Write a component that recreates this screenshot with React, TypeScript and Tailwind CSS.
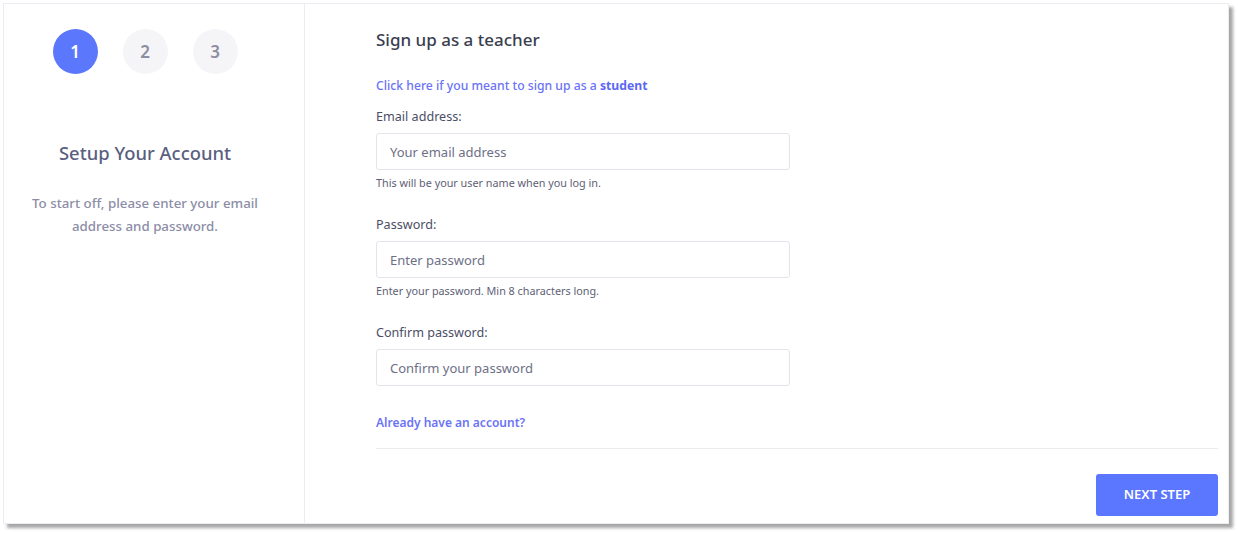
import type { JSX } from "react";

const font = { fontFamily: '"Noto Sans", "Open Sans", sans-serif' };

type FieldProps = {
  label: string;
  placeholder: string;
  type?: string;
  hint?: string;
};

const Field = ({ label, placeholder, type = "text", hint }: FieldProps): JSX.Element => {
  return (
    <div className="flex flex-col">
      <label className="text-[12.6px] leading-[18px] text-[#4b4e66]">{label}</label>
      <input
        type={type}
        placeholder={placeholder}
        className="mt-[7px] h-[37px] w-[414px] rounded-[3px] border border-[#e4e4ee] bg-white px-[13px] text-[13px] text-[#4b4e66] outline-none placeholder:text-[#6d7085]"
      />
      {hint && <p className="mt-[5px] text-[10.8px] leading-[16px] text-[#5e6175]">{hint}</p>}
    </div>
  );
};

const Step = ({ n, active }: { n: number; active?: boolean }): JSX.Element => (
  <div
    className={
      active
        ? "flex h-[45px] w-[45px] items-center justify-center rounded-full bg-[#5b78fd] text-[17px] font-semibold text-white"
        : "flex h-[45px] w-[45px] items-center justify-center rounded-full bg-[#f5f5f8] text-[17px] font-semibold text-[#8d8ea3]"
    }
  >
    {n}
  </div>
);

export default function App(): JSX.Element {
  return (
    <div className="h-[534px] w-[1238px] bg-white pl-[3px] pt-[3px]" style={font}>
      <div className="flex h-[521px] w-[1226px] border border-[#ececf2] bg-white shadow-[4px_4px_3px_rgba(0,0,0,0.35)]">
        {/* left panel */}
        <div className="flex w-[301px] flex-col items-center border-r border-[#ececf4] pr-[18px] pt-[25px]">
          <div className="flex gap-[25px]">
            <Step n={1} active />
            <Step n={2} />
            <Step n={3} />
          </div>
          <h2 className="mt-[66px] text-[18.4px] font-medium leading-[26px] text-[#5a5f80]">Setup Your Account</h2>
          <p className="mt-[26px] text-center text-[13.3px] font-medium leading-[23px] text-[#8c8da6]">
            To start off, please enter your email
            <br />
            address and password.
          </p>
        </div>

        {/* right panel */}
        <div className="flex flex-1 flex-col pl-[71px] pr-[10px] pt-[24px]">
          <h1 className="text-[17px] font-medium leading-[24px] text-[#3b3e50]">Sign up as a teacher</h1>
          <a className="mt-[25px] text-[12.2px] font-medium leading-[18px] text-[#6b73f5]" href="#">
            Click here if you meant to sign up as a <span className="font-bold text-[#5d67f2]">student</span>
          </a>
          <div className="mt-[13px] flex flex-col gap-[25px]">
            <Field label="Email address:" placeholder="Your email address" hint="This will be your user name when you log in." />
            <Field label="Password:" placeholder="Enter password" type="password" hint="Enter your password. Min 8 characters long." />
            <Field label="Confirm password:" placeholder="Confirm your password" type="password" />
          </div>
          <a className="mt-[28px] text-[12px] font-semibold leading-[18px] text-[#6b73f5]" href="#">
            Already have an account?
          </a>
          <div className="mt-[16px] border-t border-[#ececf0]" />
          <div className="mt-[25px] flex justify-end">
            <button className="h-[42px] w-[122px] rounded-[3px] bg-[#5b76ff] text-[13px] font-semibold text-white">
              NEXT STEP
            </button>
          </div>
        </div>
      </div>
    </div>
  );
}
